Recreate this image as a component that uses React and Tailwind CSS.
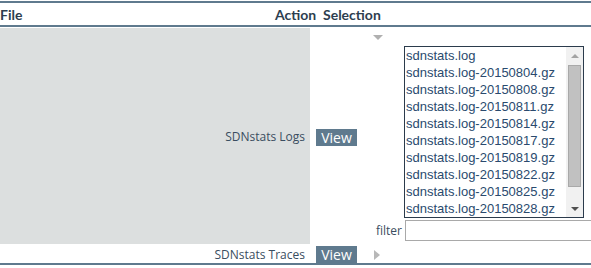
import React from "react";

const files = [
  "sdnstats.log",
  "sdnstats.log-20150804.gz",
  "sdnstats.log-20150808.gz",
  "sdnstats.log-20150811.gz",
  "sdnstats.log-20150814.gz",
  "sdnstats.log-20150817.gz",
  "sdnstats.log-20150819.gz",
  "sdnstats.log-20150822.gz",
  "sdnstats.log-20150825.gz",
  "sdnstats.log-20150828.gz",
];

function ViewButton() {
  return (
    <span className="inline-flex h-[17px] w-[41px] items-center justify-center bg-[#5f7a8e] text-[14px] leading-[17px] text-white">
      View
    </span>
  );
}

export default function App() {
  return (
    <div
      className="w-[591px] h-[268px] overflow-hidden bg-white"
      style={{ fontFamily: '"Open Sans", "Noto Sans", sans-serif' }}
    >
      <div className="mt-px border-t-2 border-[#5f7a8e]">
        {/* header */}
        <div
          className="flex h-[24px] items-center border-b-2 border-[#5f7a8e] pt-[1px] text-[14px] font-bold text-[#2d3e4f]"
          style={{ fontFamily: 'Lato, "Open Sans", sans-serif' }}
        >
          <div className="w-[275px]">File</div>
          <div className="w-[48px]">Action</div>
          <div>Selection</div>
        </div>

        {/* row 1 */}
        <div className="mt-px flex h-[216px]">
          <div className="flex w-[310px] items-center justify-end bg-[#dcdfdf] pr-[5px] pt-[2px] text-[12px] text-[#3a4d60]">
            SDNstats Logs
          </div>
          <div className="flex w-[53px] items-center pl-[6px] pt-[2px]">
            <ViewButton />
          </div>
          <div className="flex-1 overflow-hidden">
            <div className="ml-[10px] mt-[7px] h-[5px] w-[10px]">
              <svg width="10" height="5" viewBox="0 0 10 5" className="block">
                <polygon points="0,0 10,0 5,5" fill="#b0b0b0" />
              </svg>
            </div>
            <div className="ml-[41px] mt-[6px] flex h-[172px] w-[180px] border border-[#2b3b4c] bg-white">
              <div
                className="flex-1 pl-[1px] text-[13px] leading-[17px] text-[#2a4a6e]"
                style={{ fontFamily: '"Liberation Sans", Arial, sans-serif' }}
              >
                {files.map((f) => (
                  <div key={f} className="h-[17px] whitespace-nowrap">
                    {f}
                  </div>
                ))}
              </div>
              <div className="flex w-[17px] flex-col bg-[#f1f1f1]">
                <div className="flex h-[17px] items-center justify-center">
                  <svg width="8" height="4" viewBox="0 0 8 4">
                    <polygon points="0,4 8,4 4,0" fill="#a3a3a3" />
                  </svg>
                </div>
                <div className="mx-[2px] mt-px h-[122px] border border-[#a9a9a9] bg-[#c1c1c1]" />
                <div className="flex-1" />
                <div className="flex h-[17px] items-center justify-center">
                  <svg width="8" height="4" viewBox="0 0 8 4">
                    <polygon points="0,0 8,0 4,4" fill="#505050" />
                  </svg>
                </div>
              </div>
            </div>
            <div className="mt-[2px] flex items-center">
              <div className="w-[39px] shrink-0 text-right text-[12px] text-[#3a4d60]">filter</div>
              <div className="ml-[3px] h-[21px] w-[220px] shrink-0 border border-[#a9a9a9] bg-white" />
            </div>
          </div>
        </div>

        {/* row 2 */}
        <div className="mt-[2px] flex h-[19px] items-center border-b-2 border-[#5f7a8e]">
          <div className="w-[310px] pr-[5px] pt-[1px] text-right text-[12px] text-[#3a4d60]">
            SDNstats Traces
          </div>
          <div className="flex w-[53px] items-center pl-[6px]">
            <ViewButton />
          </div>
          <div className="ml-[11px]">
            <svg width="6" height="10" viewBox="0 0 6 10" className="block">
              <polygon points="0,0 6,5 0,10" fill="#b8b8b8" />
            </svg>
          </div>
        </div>
      </div>
    </div>
  );
}
